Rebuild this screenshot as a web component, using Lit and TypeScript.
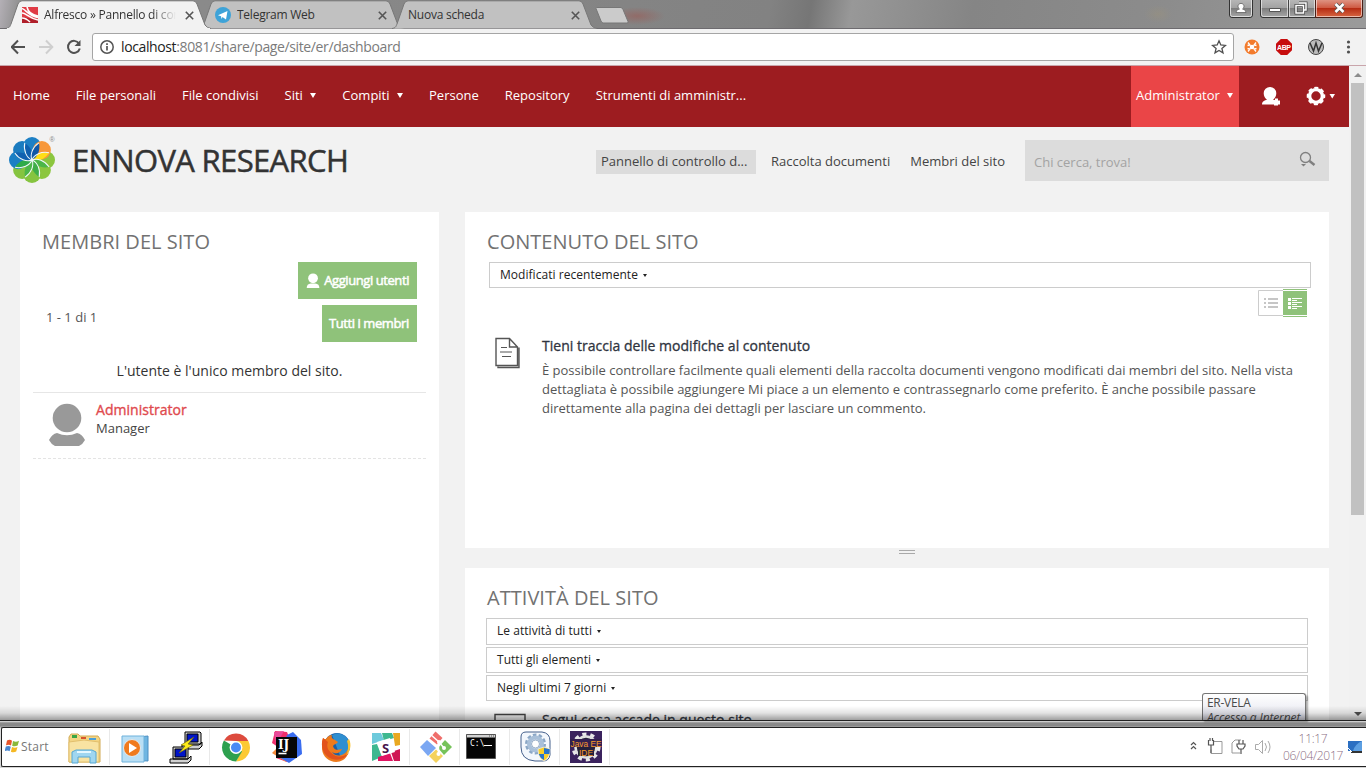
import { LitElement, html, css, svg, nothing } from "lit";
import { customElement, property } from "lit/decorators.js";

const petal = "M0 0C-4-4-9-9-9-14A9 9 0 0 1 9-14C9-9 4-4 0 0Z";
const petals: [number, string][] = [
  [90, "#8cc63f"], [135, "#8cc63f"], [180, "#86c440"], [225, "#86c440"],
  [270, "#1b7fc4"], [315, "#1b7bbf"], [0, "#1d80c5"], [45, "#f7983a"],
];
const inner: [number, string][] = [
  [67, "#ffde17"], [112, "#4cb648"], [157, "#3fae49"], [202, "#4db649"],
  [247, "#2fab4a"], [292, "#1161b0"], [337, "#105fae"], [22, "#0f57a6"],
];

const userShape = svg`<path d="M1262 104.500c0-3 2.500-4.300 5-4.800-2-1.500-3.300-3.700-3.300-6.400a6.300 6.300 0 0 1 12.600 0c0 2.700-1.300 5-3.300 6.400l2 .3v-1.500h3v2h2v4h-2v1h-4v-1z"/>`;

const separators = new Set([0, 2, 6, 7, 8, 9, 10]);
const taskIcons = [
  svg`<path d="M69 737l2-3h7l2 2h18l2 3v23H69z" fill="#f3d583" stroke="#d2aa55"/><path d="M72 735h5v3h-5z" fill="#3aa644"/><path d="M81 737h5v2h-5z" fill="#d8542e"/><path d="M89 738h7v2h-7z" fill="#4c9fd8"/><path d="M69 742l15-2 15 2v20H69z" fill="#f8e3a2" stroke="#e2bf6c"/><path d="M72 763v-11l4-2h16l4 2v11h-6v-6H78v6z" fill="#9fd6f0" stroke="#57a7d2"/><path d="M77 752h14" stroke="#e5f8ff" stroke-width="2"/>`,
  svg`<path d="M127 738l21-2v25l-21-1z" fill="#6fb6e2" stroke="#4c8fc2"/><path d="M122 736h22v26h-22z" fill="#b9dff5" stroke="#6fb2dc"/><circle cx="132" cy="748" r="8.500" fill="#f07a1d" stroke="#dfe9f0"/><path d="M129 743v10l8-5z" fill="#fff"/>`,
  svg`<path d="M185 732h15l1 1v11h-16zM182 745h17l3-3v4l-3 3h-17z" fill="#d0d0d0" stroke="#000"/><path d="M187 734h11v8h-11z" fill="#0014c8" stroke="#000"/><path d="M173 747h15v12h-15zM170 759h18l3-3v4l-3 3h-18z" fill="#d0d0d0" stroke="#000"/><path d="M175 749h11v8h-11z" fill="#0014c8" stroke="#000"/><path d="M194 737l-13 8 4 1-6 7 14-8-5-1z" fill="#ffec1a" stroke="#6b6200" stroke-width=".6"/>`,
  svg`<circle cx="236" cy="747.500" r="14" fill="#fff"/><path d="M236 741h12.400A14 14 0 0 1 236 761.500l5.600-10.700z" fill="#fcc934"/><path d="M223.900 740.500A14 14 0 0 0 236 761.500l6-10-6-4z" fill="#2da04f"/><path d="M223.900 740.500L236 741h12.300a14 14 0 0 0-24.400-.5l6 10.300z" fill="#dd4b3e"/><circle cx="236" cy="747.500" r="6.400" fill="#fff"/><circle cx="236" cy="747.500" r="5" fill="#4a8af4"/>`,
  svg`<path d="M275 731l12 1 4 10-4 20-11-4 2-11-6-4z" fill="#f0306c"/><path d="M272 753l8-8 6 17z" fill="#f58b3c"/><path d="M287 735l6-3 8 8 1 14-13 9-10-6z" fill="#3a6df0"/><path d="M274 732l10-1-8 14z" fill="#e84a9a"/><path d="M276 737h21v21h-21z" fill="#060606"/><path d="M278.500 753.500h8" stroke="#fff" stroke-width="1.600"/><text x="278" y="749" class="ij">IJ</text>`,
  svg`<circle cx="337" cy="746" r="13" fill="#1b5fa8"/><path d="M332 735c7-4 15 0 17 7 2 6-2 14-8 16l-4-10z" fill="#2f8fd0"/><path d="M323 738c1 1 2 1 3 1 2-3 4-4 6-4-1 2 0 4 3 5l3 2c-1 2-4 2-5 4 1 5 6 4 9 3-2 5-7 5-10 3 4 6 13 4 16-3 0 0 1 8-5 11-8 5-20 0-21-11 0-4 0-7 1-11z" fill="#ee7a1c"/><path d="M323 738c-3 8 0 18 9 21 7 2 13 0 17-6-4 3-10 5-15 2-6-4-8-8-6-13z" fill="#e2531c"/><path d="M349 739c3 6 1 13-3 17 2-5 3-10 1-15z" fill="#f9c02d"/>`,
  svg`<path d="M372 733h28v28h-28z" fill="#fff"/><path d="M372 733h9l3 7-12 4z" fill="#6ecadc"/><path d="M382 733h10l2 5-10 3z" fill="#3eb890"/><path d="M393 733h7v12l-5 1z" fill="#e9a820"/><path d="M372 745l5-1 5 13-10 4z" fill="#3eb890"/><path d="M378 757l12-4 3 8h-15z" fill="#e01563"/><path d="M391 752l9-3v12h-6z" fill="#cf1554"/><path d="M377 742l13-4 5 14-13 4z" fill="#fff"/><text x="382" y="752.500" class="slack">S</text>`,
  svg`<path d="M435.500 731.500l7 6.500-5.500 6.500-7.500-6z" fill="#ef6e6b"/><path d="M420 747l7-7 9 8-8 8z" fill="#7ba7f2"/><path d="M445 740l7 7-8 8-6-7z" fill="#76c35a"/><path d="M436 749.500l7 6.500-7 7-7-7z" fill="#f4d25c"/><path d="M430 734l9 8 5 6M438.500 742v12" stroke="#fff" stroke-width="1.500" fill="none"/><circle cx="439" cy="742" r="2" fill="#fff"/><circle cx="444" cy="748" r="2" fill="#fff"/><circle cx="438.500" cy="754" r="2" fill="#fff"/>`,
  svg`<path d="M466.500 734.500h29v24h-29z" fill="#050505" stroke="#555"/><path d="M467 735h28v2.500h-28z" fill="#d2d2d2"/><path d="M489 736h5" stroke="#555" stroke-dasharray="1 1"/><text x="470" y="746" class="cmd">C:\\</text><path d="M484 745.500h8" stroke="#fff"/>`,
  svg`<path d="M526 732h16q8 1 8 9v14q-1 6-7 6h-8q-14-1-14-14v-10q0-5 5-5z" fill="#f3f7fc" stroke="#45608c"/><circle cx="535.500" cy="744" r="9" fill="none" stroke="#8ba7c6" stroke-width="3" stroke-dasharray="3.500 2.150"/><circle cx="535.500" cy="744" r="6.500" fill="none" stroke="#a9c0d9" stroke-width="4"/><circle cx="535.500" cy="744" r="4" fill="#fff" stroke="#6f8db0" stroke-width=".7"/><path d="M538 749l6-2 6 2q0 9-6 12-6-3-6-12z" fill="#f8cf2c" stroke="#f0f0f0" stroke-width=".7"/><path d="M544 748v6h5.400q.4-2 .4-4.700zM544 754v6q-4-2-5.300-6z" fill="#2674cc"/>`,
  svg`<path d="M570 731h32v32h-32z" fill="#3b235e"/><circle cx="586" cy="747" r="12.500" fill="none" stroke="#e8e8e8" stroke-width="4" stroke-dasharray="4 3.850"/><circle cx="586" cy="747" r="10.500" fill="#26203a" stroke="#e0e0e0" stroke-width="2.500"/><path d="M570 739h32v8h-32z" fill="#33204f"/><path d="M578 748h16v8h-16z" fill="#26203a"/><text x="570.500" y="746.500" class="jee" textLength="31" lengthAdjust="spacingAndGlyphs">Java EE</text><text x="579" y="755.500" class="jee" textLength="14" lengthAdjust="spacingAndGlyphs">IDE</text>`,
];

@customElement("chrome-tab")
class ChromeTab extends LitElement {
  @property({ type: Boolean }) active = false;
  @property() label = "";
  @property() icon = "";
  static styles = css`
    :host { display: block; position: relative; width: 205px; height: 29px; margin-right: -12px; flex: none; }
    :host([active]) { z-index: 3; }
    .shape { position: absolute; inset: 0; }
    .row { position: relative; display: flex; align-items: center; height: 28px; padding: 2px 0 0 16px; box-sizing: border-box; width: 187.5px; }
    .fav { width: 16px; height: 16px; flex: none; margin-right: 6px; }
    .label { flex: 1; white-space: nowrap; overflow: hidden; font: 12px/18px "Open Sans", sans-serif; letter-spacing: -0.24px; color: #333; }
    :host([active]) .label { -webkit-mask-image: linear-gradient(90deg, #000 108px, transparent 132px); mask-image: linear-gradient(90deg, #000 108px, transparent 132px); }
    .close { width: 9px; height: 9px; margin-left: 6px; flex: none; }
  `;
  render() {
    return html`<svg class="shape" width="205" height="29">
        <path d="M0 28.500C4 28 4 26 5 24L12 4Q13 1 16 .8H187Q190 1 191 4L199 25Q201 28 205 28.500" fill=${this.active ? "#f2f2f2" : "#c1c1c1"} stroke="#777" />
        ${this.active ? svg`<path d="M1 29h203" stroke="#f2f2f2" stroke-width="2"/>` : nothing}
      </svg>
      <div class="row">
        ${this.icon === "alf" ? html`<svg class="fav" viewBox="0 0 16 16"><path d="M0 0h16v16H0z" fill="#e03b45"/><path d="M0 10l16 3v3H0z" fill="#b01f2a"/><path d="M0 1.500c4 1 6 7 16 9M5 0c1 5 5 8 11 9M0 6c4 0 7 5 16 7M0 11c3 0 5 1 8 4" fill="none" stroke="#fff" stroke-width="1.600"/></svg>` : nothing}
        ${this.icon === "tg" ? html`<svg class="fav" viewBox="0 0 16 16"><circle cx="8" cy="8" r="8" fill="#3ea3d8"/><path d="M3 8.300L12.500 4 11 12.500 7.500 10 6.500 12 6 9.300z" fill="#fff"/></svg>` : nothing}
        <span class="label">${this.label}</span>
        <svg class="close" viewBox="0 0 9 9"><path d="M.8.8l7.400 7.400M8.200.8L.8 8.200" stroke="#555" stroke-width="1.600"/></svg>
      </div>`;
  }
}

@customElement("app-root")
class AppRoot extends LitElement {
  static styles = css`
    :host { display: block; width: 1366px; height: 768px; overflow: hidden; position: relative; font-family: "Open Sans", sans-serif; font-size: 13px; color: #333; background: #f2f2f2; }
    * { box-sizing: border-box; }
    .window { display: flex; flex-direction: column; height: 768px; }
    svg { display: block; flex: none; }
    .strip { height: 29px; flex: none; display: flex; padding-left: 6px; border-bottom: 1px solid #6d6b6f;
      background: radial-gradient(ellipse 28px 9px at 637px 16px, #985f5aaa, transparent), radial-gradient(ellipse 14px 9px at 1158px 14px, #a8986f40, transparent), linear-gradient(100deg, #b4b0b6 0, #909090 20px, #8a8a8a 200px, #828282 760px, #767676 800px, #989898 840px, #858585 960px, #8c8c8c 1150px, #9a9a9a 1340px); }
    .strip > svg { align-self: flex-start; }
    .controls { margin-left: auto; }
    .newtab { margin: 7px 0 0 10px; }
    .tool { height: 37px; flex: none; display: flex; align-items: center; padding: 0 8px 0 11px; border-bottom: 1px solid #c9a5ab; background: #f2f2f2; }
    .omni { width: 1142px; height: 28px; margin: 0 10px 0 10px; border: 1px solid #a5a5a5; border-radius: 3px; background: #fff; display: flex; align-items: center; padding: 0 6px 0 7px; }
    .url { flex: 1; font-size: 14px; letter-spacing: -0.38px; margin-left: 7px; color: #7b7b7b; line-height: 24px; white-space: nowrap; }
    .url b { font-weight: 400; color: #222; }
    .view { flex: 1; min-height: 0; overflow: hidden; display: flex; }
    .page { width: 1349px; flex: none; background: #f2f2f2; }
    .nav { height: 61px; background: #9d1c20; color: #fff; display: flex; align-items: center; white-space: nowrap; }
    .nav .item { padding: 0 13px; display: flex; align-items: center; line-height: 20px; margin-top: -4px; }
    .tri { width: 0; height: 0; border: 2.5px solid transparent; border-top: 4.5px solid currentColor; border-bottom: 0; margin: 1px 0 0 8px; }
    .nav .tri { border-width: 5px 3px 0; margin: 2px 0 0 7.500px; }
    .nav .admin .tri { margin-left: 7px; }
    .admin { margin-left: auto; width: 108px; height: 61px; background: #ea4547; display: flex; align-items: center; padding: 0 5px 4px; }
    .navicons { width: 110px; height: 61px; }
    .head { height: 85px; display: flex; align-items: flex-start; padding: 9px 20px 0 8px; }
    .title { font-size: 31px; line-height: 40px; margin: 4px 0 0 14px; letter-spacing: -0.65px; white-space: nowrap; -webkit-text-stroke: 0.5px #333; width: 524px; }
    .link { height: 24px; margin-top: 14px; line-height: 23px; padding: 0 5px; margin-right: 10px; white-space: nowrap; color: #444; }
    .link.on { background: #dcdcdc; width: 160px; }
    .search { margin: 4px 0 0 auto; width: 304px; height: 41px; background: #dcdcdc; color: #a3a3a3; display: flex; align-items: center; justify-content: space-between; padding: 3px 13px 0 9px; }
    .search svg { margin-top: -6px; }
    .cols { display: flex; gap: 26px; padding-left: 20px; }
    .card { background: #fff; }
    .left { width: 419px; height: 560px; }
    .right { width: 864px; }
    h2 { margin: 0; font-weight: 400; font-size: 20px; line-height: 28px; color: #727272; padding: 16px 0 0 22px; letter-spacing: 0.03px; white-space: nowrap; }
    .btnrow { display: flex; justify-content: space-between; align-items: flex-start; padding: 0 22px 0 26px; }
    .btnrow.first { margin-top: 6px; justify-content: flex-end; }
    .btnrow.second { margin-top: 6px; }
    .btn { height: 37px; background: #8fc27a; color: #fff; display: flex; align-items: center; justify-content: space-between; padding: 0 8px 1px; white-space: nowrap; -webkit-text-stroke: 0.5px #fff; letter-spacing: -0.42px; }
    .btn.a { width: 119px; }
    .btn.b { width: 95px; padding-left: 7px; }
    .count { line-height: 24px; color: #555; }
    .note { text-align: center; font-size: 14px; line-height: 20px; margin: 19px 13px 0; padding-bottom: 11px; border-bottom: 1px solid #e6e6e6; letter-spacing: 0.01px; }
    .member { display: flex; margin: 0 13px; height: 66px; border-bottom: 1px dashed #e4e4e4; padding: 8px 0 0 15px; gap: 11px; }
    .member svg { margin-top: 1px; }
    .name { font-size: 14px; line-height: 18px; color: #df4a4e; -webkit-text-stroke: 0.35px #df4a4e; letter-spacing: 0.03px; }
    .role { line-height: 18px; color: #444; }
    .drop { height: 26px; border: 1px solid #ccc; font-size: 12px; color: #222; padding: 0 0 1px 10px; width: 822px; display: flex; align-items: flex-start; line-height: 24px; letter-spacing: 0.04px; }
    .drop .tri { border-width: 3px 2.5px 0; margin: 11px 0 0 5px; }
    .content { height: 336px; }
    .content .drop { margin: 6px 0 0 24px; }
    .views { margin: 1px 0 0 792px; }
    .msg { display: flex; padding: 17px 0 0 29px; gap: 21px; }
    .msg h3 { margin: -1px 0 0; font-weight: 400; font-size: 14px; line-height: 22px; color: #2f3440; -webkit-text-stroke: 0.3px #2f3440; letter-spacing: 0.02px; }
    .msg p { margin: 4px 0 0; line-height: 19px; color: #555; white-space: nowrap; }
    .grip { width: 16px; height: 4px; border: solid #a9a9a9; border-width: 1px 0; margin: 2px 0 14px 433.500px; }
    .activity { height: 200px; }
    .activity .drop { margin: 0 0 2px 21px; }
    .activity h2 + .drop { height: 27px; }
    .activity h2 { padding-bottom: 6px; }
    .activity .msg { padding-top: 7px; gap: 16px; }
    .bar { width: 17px; background: #f1f1f1; display: flex; flex-direction: column; align-items: center; padding-top: 7px; }
    .up { border: 4px solid transparent; border-bottom: 4px solid #8c8c8c; border-top: 0; }
    .thumb { width: 13px; height: 432px; background: #c1c1c1; margin: 6px 0 197px 0; }
    .down { border: 4px solid transparent; border-top: 4px solid #505050; border-bottom: 0; }
    .shade { position: absolute; left: 0; top: 706px; width: 1366px; height: 14px; background: linear-gradient(#0000, #0000001c 50%, #00000060); }
    .tip { position: absolute; left: 1202px; top: 693px; width: 104px; height: 27px; overflow: hidden; border: 1px solid #767676; border-bottom: 0; border-radius: 3px 3px 0 0; background: linear-gradient(#fff, #e2e3ee); font-size: 12px; line-height: 15px; padding: 1px 0 0 4px; letter-spacing: -0.3px; color: #4b4b4b; box-shadow: 2px 2px 2px #0005; white-space: nowrap; }
    .tip i { letter-spacing: -0.12px; }
    .task { position: relative; height: 48px; flex: none; border-top: 1px solid #222; background: linear-gradient(#e4e4e4 0, #8a8a8a 2px, #888 5px, #cfcfcf 7px, #ddd 8px, #d5d5d5); padding: 6px 0 1px 1px; }
    .inner { height: 40px; background: #fff; border: 1px solid #222; border-right: 0; border-radius: 2px 0 0 2px; display: flex; align-items: center; }
    .start { width: 58px; display: flex; align-items: center; gap: 2px; padding: 0 0 2px 3px; color: #777; font-size: 12px; letter-spacing: 0.2px; }
    .tray { margin-left: auto; }
    .clock { width: 70px; text-align: center; font-size: 12px; line-height: 17px; color: #8d6f86; letter-spacing: -0.3px; font-weight: 300; }
    .ij { font: bold 12px "DejaVu Serif", serif; fill: #fff; }
    .slack { font: bold 13px "Open Sans", sans-serif; fill: #4a154b; }
    .cmd { font: 8px "DejaVu Sans Mono", monospace; fill: #fff; }
    .jee { font: 9px "Liberation Sans", sans-serif; fill: #f59a2a; }
    .abp { font: bold 7px "Liberation Sans", sans-serif; fill: #fff; }
    .reg { font: 7px "Liberation Sans", sans-serif; fill: #888; }
  `;

  private drop(label: string) {
    return html`<div class="drop">${label}<span class="tri"></span></div>`;
  }

  private chrome() {
    return html`
      <div class="strip">
        <chrome-tab active icon="alf" label="Alfresco » Pannello di controllo"></chrome-tab>
        <chrome-tab icon="tg" label="Telegram Web"></chrome-tab>
        <chrome-tab label="Nuova scheda"></chrome-tab>
        <svg class="newtab" width="34" height="17" viewBox="595 7 34 17"><path d="M596 8.500Q596 7.500 597 7.500h24q1 0 2 2l5 12q.5 1.500-1 1.500h-24q-1 0-2-2z" fill="#cbcbcb" stroke="#777"/></svg>
        <svg class="controls" width="140" height="20" viewBox="1226 0 140 20">
          <defs><linearGradient id="g" x2="0" y2="1"><stop offset="0" stop-color="#bbb"/><stop offset=".5" stop-color="#a2a2a2"/><stop offset=".52" stop-color="#7c7c7c"/><stop offset="1" stop-color="#a8a8a8"/></linearGradient>
          <linearGradient id="r" x2="0" y2="1"><stop offset="0" stop-color="#e2a192"/><stop offset=".5" stop-color="#cf5a43"/><stop offset=".52" stop-color="#b52a12"/><stop offset="1" stop-color="#d96a45"/></linearGradient></defs>
          <path d="M1229.500-2v17q0 2.500 2.500 2.500h18q2.500 0 2.500-2.500V-2z" fill="url(#g)" stroke="#333"/><path d="M1230.500-2v16.500q0 2 2 2h17q2 0 2-2V-2z" fill="none" stroke="#ddd"/>
          <path d="M1260.500-2v17q0 2.500 2.500 2.500h97q2.500 0 2.500-2.500V-2z" fill="url(#g)" stroke="#333"/>
          <path d="M1315.500-2v19.500H1360q2.500 0 2.500-2.500V-2z" fill="url(#r)" stroke="#4a2018"/>
          <path d="M1288.500 0v17" stroke="#444"/><path d="M1261.500 0v14.500q0 2 2 2h24V0M1289.500 0v16.500h25V0M1316.500 0v16.500h43q2 0 2-2V0" fill="none" stroke="#ffffff90"/>
          <path d="M1236 12.500q0-3 3.500-3.500a3 3 0 1 1 3 0q3.500.5 3.500 3.500z" fill="#fff" stroke="#555" stroke-width=".7"/>
          <path d="M1269.500 8.500h11v3h-11z" fill="#fff" stroke="#555"/>
          <path d="M1299 3h7v7h-2M1296 5.500h7.500v7.500H1296z" fill="none" stroke="#444" stroke-width="3"/><path d="M1299 3h7v7h-2M1296 5.500h7.500v7.500H1296z" fill="none" stroke="#fff" stroke-width="1.500"/>
          <path d="M1335.500 4l8 8M1343.500 4l-8 8" stroke="#555" stroke-width="4"/><path d="M1335.500 4l8 8M1343.500 4l-8 8" stroke="#fff" stroke-width="2.500"/>
        </svg>
      </div>
      <div class="tool">
        <svg width="71" height="28" viewBox="11 33 71 28" fill="none" stroke-width="2"><path d="M25 47H12M18 40.500L11.700 47l6.300 6.500" stroke="#505050"/><path d="M39 47h13M46 40.500l6.300 6.500-6.300 6.500" stroke="#cfcfcf"/><path d="M79 43.500a6 6 0 1 0 .8 5" stroke="#505050"/><path d="M80.500 40v6h-6z" fill="#505050"/></svg>
        <div class="omni">
          <svg width="14" height="14" viewBox="0 0 14 14"><circle cx="7" cy="7" r="6.200" fill="none" stroke="#555" stroke-width="1.500"/><path d="M7 6v4.500M7 3.200v1.700" stroke="#555" stroke-width="1.700"/></svg>
          <span class="url"><b>localhost</b>:8081/share/page/site/er/dashboard</span>
          <svg width="16" height="16" viewBox="0 0 16 16"><path d="M8 1.800l1.800 4.200 4.600.4-3.500 3 1.100 4.500L8 11.500l-4 2.400 1.100-4.500-3.500-3L6.200 6z" fill="none" stroke="#505050" stroke-width="1.300"/></svg>
        </div>
        <svg width="112" height="18" viewBox="1244 38 112 18">
          <circle cx="1252" cy="47" r="7.500" fill="#f37b2c"/><path d="M1248 42.500l2 2.500-2.500.5M1256 42.500l-2 2.500 2.500.5M1248 51.500l2-2.500-2.500-.5M1256 51.500l-2-2.500 2.500-.5" stroke="#fff" stroke-width="1.300" fill="none"/><circle cx="1252" cy="47" r="2.300" fill="#fff"/>
          <path d="M1280.800 39h6.400l4.800 4.800v6.400l-4.800 4.800h-6.400l-4.800-4.800v-6.400z" fill="#c70d0d"/><text x="1277" y="49.500" class="abp" textLength="14">ABP</text>
          <circle cx="1316" cy="47" r="7.500" fill="#bbb" stroke="#444"/><path d="M1310 43l3.500 8 2.500-8 2.500 8 3.500-8" fill="none" stroke="#333" stroke-width="1.500"/>
          <g fill="#505050"><circle cx="1348.500" cy="42" r="1.600"/><circle cx="1348.500" cy="47" r="1.600"/><circle cx="1348.500" cy="52" r="1.600"/></g>
        </svg>
      </div>`;
  }

  private page() {
    const nav = ["Home", "File personali", "File condivisi", "Siti", "Compiti", "Persone", "Repository", "Strumenti di amministr..."];
    return html`<div class="page">
      <div class="nav">
        ${nav.map((n) => html`<span class="item">${n}${n === "Siti" || n === "Compiti" ? html`<span class="tri"></span>` : nothing}</span>`)}
        <div class="admin">Administrator<span class="tri"></span></div>
        <svg class="navicons" viewBox="1239 66 110 61" fill="#fff">${userShape}
          <circle cx="1316" cy="96" r="6.400" fill="none" stroke="#fff" stroke-width="3.400"/><circle cx="1316" cy="96" r="8.300" fill="none" stroke="#fff" stroke-width="2" stroke-dasharray="4 2.520" stroke-dashoffset="2"/><path d="M1329.500 94h5.500l-2.750 4.500z"/></svg>
      </div>
      <div class="head">
        <svg width="50" height="50" viewBox="8 136 50 50"><g transform="translate(32 160)">
          ${petals.map(([a, c]) => svg`<path d=${petal} transform="rotate(${a})" fill=${c}/>`)}
          ${inner.map(([a, c]) => svg`<path d="M0 0C-4-4-4.500-12 0-18.500C4.500-12 4-4 0 0Z" transform="rotate(${a})" fill=${c}/>`)}
          ${inner.map(([a]) => svg`<path d="M0 0C-4-4-4.500-12 0-18.500" transform="rotate(${a})" fill="none" stroke="#f2f8fb" stroke-width="1"/>`)}
          </g><text x="49.500" y="142" class="reg">®</text></svg>
        <div class="title">ENNOVA RESEARCH</div>
        <span class="link on">Pannello di controllo d...</span><span class="link">Raccolta documenti</span><span class="link">Membri del sito</span>
        <div class="search">Chi cerca, trova!<svg width="18" height="18" viewBox="1298 150 18 18"><circle cx="1305.500" cy="157.500" r="5" fill="none" stroke="#7f7f7f" stroke-width="1.300"/><path d="M1309.500 161l5 4" stroke="#7f7f7f" stroke-width="2.500"/><path d="M1301 164h5l-2.500 2.500z" fill="#7f7f7f"/></svg></div>
      </div>
      <div class="cols">
        <div class="card left">
          <h2>MEMBRI DEL SITO</h2>
          <div class="btnrow first"><div class="btn a"><svg width="14" height="15" viewBox="1262 86.500 15.500 18.500" fill="#fff" stroke="none"><circle cx="1269.800" cy="93" r="6"/><path d="M1262 105q0-5 5-5.500h5.600q5 .5 5 5.500z"/></svg>Aggiungi utenti</div></div>
          <div class="btnrow second"><span class="count">1 - 1 di 1</span><div class="btn b">Tutti i membri</div></div>
          <div class="note">L'utente è l'unico membro del sito.</div>
          <div class="member">
            <svg width="37" height="46" viewBox="48 402 37 46" fill="#999"><circle cx="67" cy="418" r="14.300"/><path d="M49 440q3-6 8-7 10 4.500 20 0 5 1 8 7-2 4-6 6H55q-4-2-6-6z"/></svg>
            <div><div class="name">Administrator</div><div class="role">Manager</div></div>
          </div>
        </div>
        <div class="right">
          <div class="card content">
            <h2>CONTENUTO DEL SITO</h2>
            ${this.drop("Modificati recentemente")}
            <svg class="views" width="52" height="30" viewBox="1257 289 52 30"><path d="M1283 290.500h-24.500v25H1283" fill="none" stroke="#ccc"/><path d="M1283 289h24v1h-24zM1283 291h24v24h-24zM1283 316h24v1h-24z" fill="#8fc27a"/><path d="M1264 299h2M1268 299h10M1264 303h2M1268 303h10M1264 307h2M1268 307h10" stroke="#c6c6c6" stroke-width="2"/><path d="M1288 299.500h3M1288 303.500h3M1288 307.500h3" stroke="#fff" stroke-width="3"/><path d="M1292 298.500h10M1292 300.500h5M1292 302.500h10M1292 304.500h5M1292 306.500h10M1292 308.500h5" stroke="#fff"/></svg>
            <div class="msg">
              <svg width="27" height="33" viewBox="494 336 27 33" fill="none" stroke="#555" stroke-width="1.400"><path d="M496 338.500h13.500l8 8.500v18.500H496zM509.500 338.500V347h8M498 366.500v1h21V347.500" /><path d="M501 347.500h6M500 352h12M502 356.500h9" stroke-width="1"/></svg>
              <div><h3>Tieni traccia delle modifiche al contenuto</h3>
                <p>È possibile controllare facilmente quali elementi della raccolta documenti vengono modificati dai membri del sito. Nella vista<br/>dettagliata è possibile aggiungere Mi piace a un elemento e contrassegnarlo come preferito. È anche possibile passare<br/>direttamente alla pagina dei dettagli per lasciare un commento.</p></div>
            </div>
          </div>
          <div class="grip"></div>
          <div class="card activity">
            <h2>ATTIVITÀ DEL SITO</h2>
            ${this.drop("Le attività di tutti")}${this.drop("Tutti gli elementi")}${this.drop("Negli ultimi 7 giorni")}
            <div class="msg"><svg width="32" height="20" viewBox="0 0 32 20"><path d="M1 20V4.500h30V20" fill="none" stroke="#444" stroke-width="1.400"/></svg><div><h3>Segui cosa accade in questo sito</h3></div></div>
          </div>
        </div>
      </div>
    </div>`;
  }

  render() {
    return html`<div class="window">
      ${this.chrome()}
      <div class="view">${this.page()}<div class="bar"><div class="up"></div><div class="thumb"></div><div class="down"></div></div></div>
      <div class="task"><div class="inner">
        <div class="start"><svg width="14" height="14" viewBox="0 0 14 14"><path d="M2 1.500q3-1.500 5 .3L6 6.500q-2-1.500-5-.2z" fill="#e8552a"/><path d="M8 2q3 1.500 6-.2l-1.300 4.700q-3 1.500-5.500.3z" fill="#8ab83a"/><path d="M.8 7.500q3-1.300 5 .2l-1.200 4.600q-2-1.500-5-.1z" fill="#4a87d0"/><path d="M7 8q3 1.500 5.500 0l-1.300 4.500q-2.500 1.500-5.300.2z" fill="#f5b823"/></svg>Start</div>
        ${taskIcons.map((t, i) => html`<svg width="50" height="38" viewBox="${60 + 50 * i} 728 50 38">${separators.has(i) ? svg`<path d="M${109.5 + 50 * i} 729v36" stroke="#e9e9e9"/>` : nothing}${t}</svg>`)}
        <svg class="tray" width="90" height="38" viewBox="1187 728 90 38" fill="none" stroke="#555"><path d="M1190 745l2.500-2.500 2.500 2.500M1190 749l2.500-2.500 2.500 2.500" stroke-width="1.200"/><path d="M1213 741.500h8v12h-11v-4" stroke="#999"/><path d="M1207.500 740v5h5v-5M1209 738v3M1211.500 738v3M1210 745v8" stroke-width="1.200"/><path d="M1240 740h-6l-3 3v10h8" stroke="#999"/><path d="M1236 744h8v2l-2 3h-4l-2-3zM1238 740v4M1242 740v4M1240 749v5" stroke-width="1.200"/><path d="M1254.500 744.500h3l4-4v13l-4-4h-3zM1264 743q3 4 0 8M1267 741q4 6 0 12" stroke="#aaa"/></svg>
        <div class="clock">11:17<br/>06/04/2017</div>
        <svg width="18" height="14" viewBox="0 0 18 14"><path d="M0 1h14v10H0z" fill="#2b6fc2"/><path d="M5 11q2-7 9-10v10z" fill="#5c9fe2"/><path d="M3 12h11" stroke="#333" stroke-width="2"/><path d="M0 8l4 4" stroke="#fff"/></svg>
      </div></div>
      </div>
      <div class="tip">ER-VELA<br/><i>Accesso a Internet</i></div>
      <div class="shade"></div>`;
  }
}
